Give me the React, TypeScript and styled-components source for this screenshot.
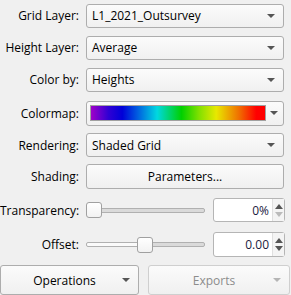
import styled, { createGlobalStyle } from 'styled-components';

const GlobalStyle = createGlobalStyle`
  html, body {
    margin: 0;
    padding: 0;
    background: #f0f0f0;
  }
`;

const Panel = styled.div`
  width: 291px;
  height: 295px;
  overflow: hidden;
  background: #f0f0f0;
  font-family: "Open Sans", "Noto Sans", sans-serif;
  font-size: 12px;
  color: #000;
  box-sizing: border-box;
  padding-top: 4px;
  display: flex;
  flex-direction: column;
`;

const Row = styled.div<{ $mt: number; $h: number }>`
  display: grid;
  grid-template-columns: 80px 198px;
  column-gap: 6px;
  align-items: center;
  margin-top: ${(p) => p.$mt}px;
  height: ${(p) => p.$h}px;
`;

const Label = styled.div`
  text-align: right;
  white-space: nowrap;
  margin-right: 1px;
`;

const Combo = styled.div<{ $disabled?: boolean }>`
  height: 100%;
  box-sizing: border-box;
  border: 1px solid ${(p) => (p.$disabled ? '#cfcfcf' : '#adadad')};
  border-radius: 3px;
  background: linear-gradient(#fbfbfb, #f0f0f0);
  display: flex;
  align-items: center;
  padding: 0 8px 0 5px;
  color: ${(p) => (p.$disabled ? '#8c8c8c' : '#000')};
`;

const ComboText = styled.span<{ $center?: boolean }>`
  flex: 1;
  text-align: ${(p) => (p.$center ? 'center' : 'left')};
  white-space: nowrap;
`;

const Arrow = styled.span<{ $disabled?: boolean }>`
  width: 0;
  height: 0;
  border-left: 4px solid transparent;
  border-right: 4px solid transparent;
  border-top: 4px solid ${(p) => (p.$disabled ? '#b5b5b5' : '#555')};
  margin-left: 4px;
`;

const Gradient = styled.div`
  flex: 1;
  height: 16px;
  box-sizing: border-box;
  border: 1px solid #a0a0a0;
  background: linear-gradient(
    to right,
    #a000c8 0%,
    #3000d4 10%,
    #0000d8 18%,
    #0060e0 27%,
    #00d8e0 38%,
    #00d000 52%,
    #80e000 62%,
    #e8e800 72%,
    #f07000 85%,
    #ff0000 95%,
    #ff0000 100%
  );
`;

const ColormapBox = styled(Combo)`
  padding: 0 5px 0 3px;
`;

const Button = styled.div`
  height: 100%;
  box-sizing: border-box;
  border: 1px solid #adadad;
  border-radius: 3px;
  background: linear-gradient(#fbfbfb, #f0f0f0);
  display: flex;
  align-items: center;
  justify-content: center;
`;

const SliderLine = styled.div`
  display: grid;
  grid-template-columns: 119px 72px;
  column-gap: 8px;
  align-items: center;
  height: 100%;
`;

const Track = styled.div`
  position: relative;
  height: 16px;
  display: flex;
  align-items: center;
`;

const Groove = styled.div<{ $fill: number }>`
  width: 100%;
  height: 5px;
  box-sizing: border-box;
  border: 1px solid #b0b0b0;
  border-radius: 2px;
  background: linear-gradient(
    to right,
    #fafafa 0%,
    #fafafa ${(p) => p.$fill}%,
    #dadada ${(p) => p.$fill}%,
    #dadada 100%
  );
`;

const Handle = styled.div`
  position: absolute;
  top: 0;
  width: 16px;
  height: 16px;
  box-sizing: border-box;
  border: 1px solid #a0a0a0;
  border-radius: 3px;
  background: linear-gradient(#ffffff, #f2f2f2);
`;

const Spin = styled.div`
  height: 100%;
  box-sizing: border-box;
  border: 1px solid #b5b5b5;
  border-radius: 3px;
  background: #fff;
  display: flex;
  align-items: stretch;
`;

const SpinValue = styled.div`
  flex: 1;
  display: flex;
  align-items: center;
  justify-content: flex-end;
  padding-right: 3px;
  color: #1a1a40;
`;

const SpinArrows = styled.div`
  width: 11px;
  display: flex;
  flex-direction: column;
  align-items: center;
  justify-content: center;
  gap: 3px;
  background: #f4f4f4;
  border-left: 1px solid #e0e0e0;
`;

const Tri = styled.span<{ $up?: boolean; $off?: boolean }>`
  width: 0;
  height: 0;
  border-left: 4px solid transparent;
  border-right: 4px solid transparent;
  ${(p) =>
    p.$up
      ? `border-bottom: 5px solid ${p.$off ? '#bbb' : '#555'};`
      : `border-top: 5px solid ${p.$off ? '#bbb' : '#555'};`}
`;

const BottomBar = styled.div`
  display: grid;
  grid-template-columns: 139px 142px;
  column-gap: 9px;
  margin-top: 8px;
  height: 30px;
`;

const MenuButton = styled(Combo)`
  padding: 0 8px 0 10px;
`;

function ComboRow({ label, value, mt, h }: { label: string; value: string; mt: number; h: number }) {
  return (
    <Row $mt={mt} $h={h}>
      <Label>{label}</Label>
      <Combo>
        <ComboText>{value}</ComboText>
        <Arrow />
      </Combo>
    </Row>
  );
}

function SliderRow({
  label, pos, fill, value, upOff, downOff, mt, h,
}: {
  label: string; pos: number; fill: number; value: string; upOff?: boolean; downOff?: boolean; mt: number; h: number;
}) {
  return (
    <Row $mt={mt} $h={h}>
      <Label>{label}</Label>
      <SliderLine>
        <Track>
          <Groove $fill={fill} />
          <Handle style={{ left: pos }} />
        </Track>
        <Spin>
          <SpinValue>{value}</SpinValue>
          <SpinArrows>
            <Tri $up $off={upOff} />
            <Tri $off={downOff} />
          </SpinArrows>
        </Spin>
      </SliderLine>
    </Row>
  );
}

export default function App() {
  return (
    <>
      <GlobalStyle />
      <Panel>
        <ComboRow label="Grid Layer:" value="L1_2021_Outsurvey" mt={0} h={24} />
        <ComboRow label="Height Layer:" value="Average" mt={8} h={24} />
        <ComboRow label="Color by:" value="Heights" mt={8} h={24} />
        <Row $mt={9} $h={25}>
          <Label>Colormap:</Label>
          <ColormapBox>
            <Gradient />
            <Arrow />
          </ColormapBox>
        </Row>
        <ComboRow label="Rendering:" value="Shaded Grid" mt={7} h={25} />
        <Row $mt={7} $h={25}>
          <Label>Shading:</Label>
          <Button>Parameters...</Button>
        </Row>
        <SliderRow label="Transparency:" pos={0} fill={0} value="0%" downOff mt={9} h={24} />
        <SliderRow label="Offset:" pos={51} fill={50} value="0.00" mt={10} h={25} />
        <BottomBar>
          <MenuButton>
            <ComboText $center>Operations</ComboText>
            <Arrow />
          </MenuButton>
          <MenuButton $disabled>
            <ComboText $center>Exports</ComboText>
            <Arrow $disabled />
          </MenuButton>
        </BottomBar>
      </Panel>
    </>
  );
}
